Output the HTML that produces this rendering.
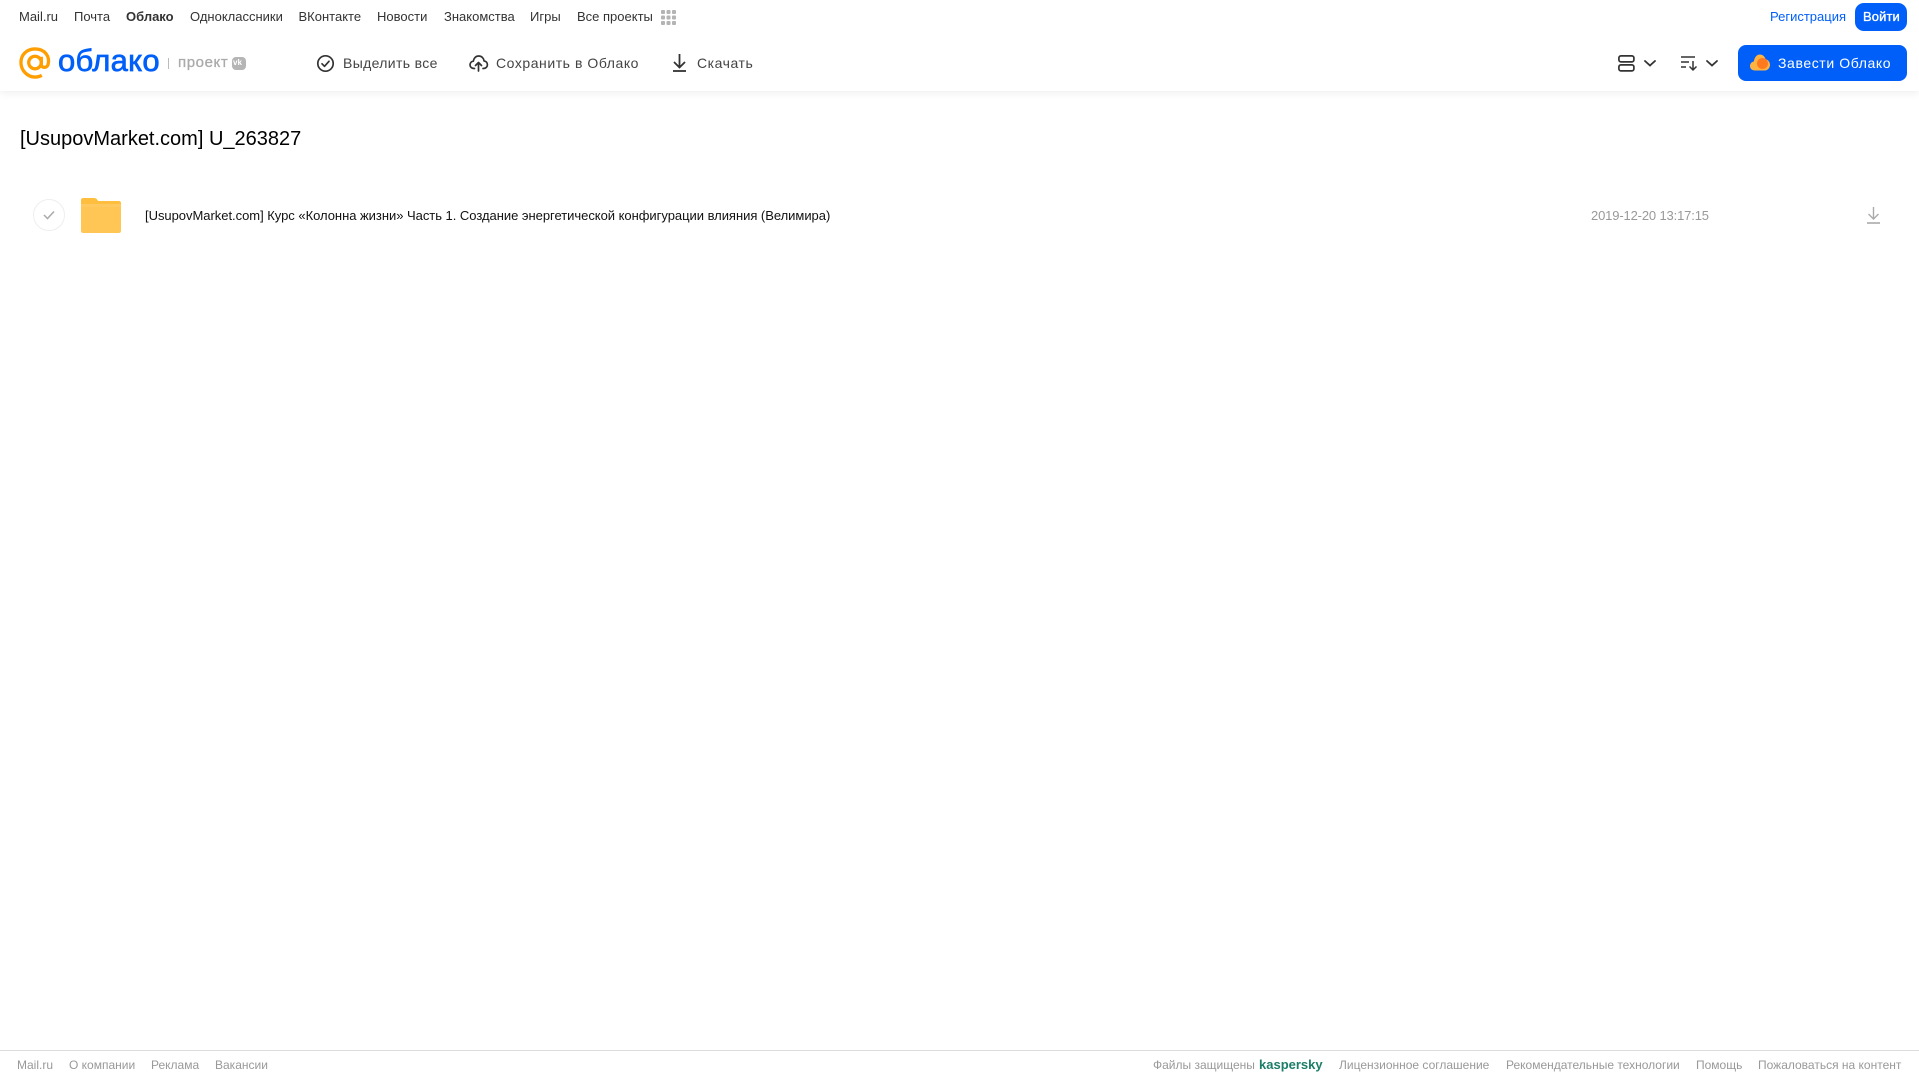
<!DOCTYPE html>
<html lang="ru"><head><meta charset="utf-8"><title>Облако</title>
<style>
html,body{margin:0;padding:0;background:#fff;width:1919px;height:1079px;overflow:hidden}
body{position:relative;font-family:"Liberation Sans",Arial,sans-serif}
.t{position:absolute;white-space:nowrap;line-height:20px;height:20px}
.n{top:7px;font-size:13px;color:#333}
.b{top:53px;font-size:14px;color:#444;letter-spacing:.55px}
.f{top:1055px;font-size:12px;color:#999}
svg{position:absolute;overflow:visible}
#hd{position:absolute;left:0;top:0;width:1919px;height:91px;background:#fff;box-shadow:0 2px 8px rgba(0,0,0,.07)}
</style></head><body>
<div id="hd"></div>
<span class="t n" style="left:19px">Mail.ru</span>
<span class="t n" style="left:74px">Почта</span>
<span class="t n" style="left:126px;font-weight:bold">Облако</span>
<span class="t n" style="left:190px">Одноклассники</span>
<span class="t n" style="left:298.500px">ВКонтакте</span>
<span class="t n" style="left:377px">Новости</span>
<span class="t n" style="left:444px">Знакомства</span>
<span class="t n" style="left:530px">Игры</span>
<span class="t n" style="left:577px">Все проекты</span>
<svg style="left:661px;top:10px" width="15" height="15" fill="#b4b4b4"><rect x="0" y="0" width="4" height="4" rx="1"/><rect x="5.500" y="0" width="4" height="4" rx="1"/><rect x="11" y="0" width="4" height="4" rx="1"/><rect x="0" y="5.500" width="4" height="4" rx="1"/><rect x="5.500" y="5.500" width="4" height="4" rx="1"/><rect x="11" y="5.500" width="4" height="4" rx="1"/><rect x="0" y="11" width="4" height="4" rx="1"/><rect x="5.500" y="11" width="4" height="4" rx="1"/><rect x="11" y="11" width="4" height="4" rx="1"/></svg>
<span class="t n" style="left:1770px;color:#005ff9">Регистрация</span>
<div style="position:absolute;left:1855px;top:3px;width:52px;height:28px;background:#005ff9;border-radius:9px"></div>
<span class="t n" style="left:1863px;color:#fff;font-size:13px;-webkit-text-stroke:.35px #fff;letter-spacing:.1px">Войти</span>

<!-- logo -->
<svg style="left:19px;top:47px" width="32" height="32" viewBox="0 0 33 33" fill="none" stroke="#ff9e00" stroke-width="3.400"><circle cx="16.500" cy="16" r="6.500"/><path d="M23 10v8c0 4 6 4 7 0 2-8-3-16-13.500-16C8 2 2 8 2 16s6.500 15 14.500 15c3 0 5-.6 7-1.800"/></svg>
<span class="t" style="left:58px;top:45px;font-size:31px;line-height:32px;height:32px;color:#005ff9;-webkit-text-stroke:.7px #005ff9;letter-spacing:.3px">облако</span>
<div style="position:absolute;left:168px;top:58px;width:1px;height:11px;background:#bbb"></div>
<span class="t" style="left:178px;top:53px;font-size:15px;color:#aaa;-webkit-text-stroke:.3px #aaa;letter-spacing:.6px">проект</span>
<div style="position:absolute;left:232px;top:57px;width:14px;height:13px;background:#b5b5b5;border-radius:4px"></div>
<span class="t" style="left:233px;top:53px;font-size:8px;font-weight:bold;color:#fff">vk</span>

<!-- toolbar -->
<svg style="left:316px;top:54px" width="19" height="19" viewBox="0 0 19 19" fill="none" stroke="#333" stroke-width="1.700"><circle cx="9.500" cy="9.500" r="7.700"/><path d="M6 9.800l2.500 2.500L13 7.300" stroke-linecap="round" stroke-linejoin="round"/></svg>
<span class="t b" style="left:343px;letter-spacing:.35px">Выделить все</span>
<svg style="left:469px;top:54px" width="19" height="18" viewBox="0 0 19 18" fill="none" stroke="#333" stroke-width="1.700" stroke-linecap="round" stroke-linejoin="round"><path d="M5.500 14.500H5C2.500 14.500 1 12.800 1 10.800 1 8.800 2.500 7.300 4.300 7.200 4.800 4 7 2 9.700 2c2.800 0 5 2 5.400 5 2 .2 3.300 1.800 3.300 3.800 0 2-1.500 3.700-3.900 3.700h-.5"/><path d="M9.500 17V8.500M6.500 11.500l3-3 3 3"/></svg>
<span class="t b" style="left:496px">Сохранить в Облако</span>
<svg style="left:672px;top:54px" width="15" height="18" viewBox="0 0 15 18" fill="none" stroke="#333" stroke-width="1.800"><path d="M7.500 0v13M2 8l5.500 5.500L13 8"/><path d="M1 17h13"/></svg>
<span class="t b" style="left:697px">Скачать</span>

<svg style="left:1618px;top:55px" width="17" height="17" viewBox="0 0 17 17" fill="none" stroke="#333" stroke-width="1.700"><rect x=".9" y=".9" width="15" height="6" rx="2"/><rect x=".9" y="9.900" width="15" height="6" rx="2"/></svg>
<svg style="left:1644px;top:60px" width="12" height="7" viewBox="0 0 12 7" fill="none" stroke="#333" stroke-width="1.800" stroke-linecap="round"><path d="M1 1l5 4.500L11 1"/></svg>
<svg style="left:1681px;top:56px" width="17" height="15" viewBox="0 0 17 15" fill="none" stroke="#333" stroke-width="1.500"><path d="M0 1h14M0 6h8M0 11h5"/><path d="M12 5v9M8.500 10.500l3.500 3.500 3.500-3.500"/></svg>
<svg style="left:1706px;top:60px" width="12" height="7" viewBox="0 0 12 7" fill="none" stroke="#333" stroke-width="1.800" stroke-linecap="round"><path d="M1 1l5 4.500L11 1"/></svg>
<div style="position:absolute;left:1738px;top:45px;width:169px;height:36px;background:#005ff9;border-radius:8px"></div>
<svg style="left:1750px;top:54px" width="20" height="17" viewBox="0 0 20 17"><path d="M5 16.500C2 16.500 0 14.600 0 12c0-2.400 1.700-4.200 3.900-4.500C4.300 3.500 6.800 .5 9.800 .5c2.900 0 5 2 5.800 4.800 2.500.4 4.400 2.800 4.400 5.600 0 3-2.300 5.600-5.200 5.600z" fill="#ffb340"/><circle cx="12.500" cy="9.500" r="5.500" fill="#ff7a1f"/></svg>
<span class="t b" style="left:1778px;color:#fff;letter-spacing:.6px">Завести Облако</span>

<!-- content -->
<span class="t" style="left:20px;top:127px;font-size:20px;line-height:24px;height:24px;color:#000">[UsupovMarket.com] U_263827</span>
<div style="position:absolute;left:33px;top:199px;width:30px;height:30px;border:1px solid #eee;border-radius:50%"></div>
<svg style="left:43px;top:210px" width="12" height="10" viewBox="0 0 12 10" fill="none" stroke="#aaa" stroke-width="1.500"><path d="M1 5l3.500 3.500L11 1.500"/></svg>
<svg style="left:81px;top:198px" width="40" height="35" viewBox="0 0 40 35"><path d="M2 0h11c2 0 3 1 4 3h21c1 0 2 1 2 2v4H0V2C0 1 1 0 2 0z" fill="#ffbe3d"/><path d="M0 9h40v24c0 1-1 2-2 2H2c-1 0-2-1-2-2z" fill="#ffc555"/><rect y="6" width="40" height="3" fill="#ffc95f"/></svg>
<span class="t" style="left:145px;top:206px;font-size:13px;color:#111;letter-spacing:-.03px">[UsupovMarket.com] Курс «Колонна жизни» Часть 1. Создание энергетической конфигурации влияния (Велимира)</span>
<span class="t" style="left:1591px;top:206px;font-size:13px;color:#999;letter-spacing:-.15px">2019-12-20 13:17:15</span>
<svg style="left:1867px;top:207px" width="13" height="17" viewBox="0 0 13 17" fill="none" stroke="#aaa" stroke-width="1.400"><path d="M6.500 0v12M1.500 7l5 5 5-5"/><path d="M0 16h13" stroke-width="1.600"/></svg>

<!-- footer -->
<div style="position:absolute;left:0;top:1050px;width:1919px;height:1px;background:#dcdcdc"></div>
<span class="t f" style="left:17px">Mail.ru</span>
<span class="t f" style="left:69px">О компании</span>
<span class="t f" style="left:151px">Реклама</span>
<span class="t f" style="left:215px">Вакансии</span>
<span class="t f" style="left:1153px">Файлы защищены</span>
<span class="t f" style="left:1259px;font-size:13px;font-weight:bold;color:#1d7d68">kaspersky</span>
<span class="t f" style="left:1339px">Лицензионное соглашение</span>
<span class="t f" style="left:1506px">Рекомендательные технологии</span>
<span class="t f" style="left:1696px">Помощь</span>
<span class="t f" style="left:1758px">Пожаловаться на контент</span>
</body></html>
